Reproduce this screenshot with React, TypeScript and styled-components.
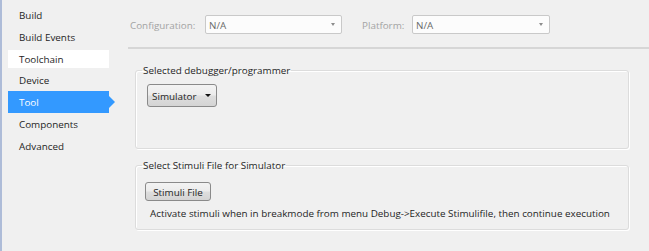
import React from "react";
import styled, { createGlobalStyle, css } from "styled-components";

const Global = createGlobalStyle`
  html, body { margin: 0; padding: 0; background: #f0f0f0; }
  body { font-family: "Open Sans", "Noto Sans", sans-serif; font-size: 9.85px; color: #1e1e1e; }
  * { box-sizing: border-box; }
`;

const Page = styled.div`
  width: 649px;
  height: 251px;
  display: flex;
  background: #f0f0f0;
  overflow: hidden;
`;

const Sidebar = styled.nav`
  width: 128px;
  flex: none;
  border-left: 2px solid #aebcd8;
  padding: 4px 0 0 6px;
  display: flex;
  flex-direction: column;
`;

type NavState = "normal" | "hover" | "selected";

const NavItem = styled.div<{ $state: NavState }>`
  position: relative;
  width: 101px;
  height: 21.8px;
  padding-left: 11px;
  display: flex;
  align-items: center;
  color: #1e1e1e;
  ${(p) =>
    p.$state === "hover" &&
    css`
      background: #ffffff;
      background-clip: padding-box;
      border-top: 2px solid transparent;
      border-bottom: 1.5px solid transparent;
    `}
  ${(p) =>
    p.$state === "selected" &&
    css`
      background: #3399ff;
      color: #ffffff;
      &::after {
        content: "";
        position: absolute;
        right: -6px;
        top: 50%;
        margin-top: -6px;
        border-left: 6px solid #3399ff;
        border-top: 6px solid transparent;
        border-bottom: 6px solid transparent;
      }
    `}
`;

const Content = styled.main`
  flex: 1;
  display: flex;
  flex-direction: column;
`;

const TopBar = styled.div`
  height: 49px;
  padding: 2px 0 0 2px;
  display: flex;
  align-items: center;
  border-bottom: 2px solid #d6d6d6;
`;

const FieldLabel = styled.span<{ $width: number; $gap?: number }>`
  width: ${(p) => p.$width}px;
  margin-left: ${(p) => p.$gap ?? 0}px;
  color: #a3a3a3;
  flex: none;
`;

const ComboDisabled = styled.div<{ $width: number }>`
  width: ${(p) => p.$width}px;
  height: 19px;
  border: 1px solid #c9c9c9;
  border-radius: 2px;
  background: #fcfcfc;
  display: flex;
  align-items: center;
  justify-content: space-between;
  padding: 0 6px 0 3px;
  color: #6a6a6a;
  flex: none;
`;

const SmallArrow = styled.span<{ $color: string; $size?: number }>`
  width: 0;
  height: 0;
  border-left: ${(p) => p.$size ?? 2.5}px solid transparent;
  border-right: ${(p) => p.$size ?? 2.5}px solid transparent;
  border-top: ${(p) => (p.$size ?? 2.5) + 0.5}px solid ${(p) => p.$color};
`;

const Body = styled.div`
  padding: 0 20px 0 7px;
  display: flex;
  flex-direction: column;
`;

const Group = styled.fieldset<{ $top: number }>`
  margin: ${(p) => p.$top}px 0 0 0;
  padding: 0;
  border: 1px solid #dcdcdc;
  border-radius: 3px;
  box-shadow: 1px 1px 0 #ffffff, inset 1px 1px 0 #ffffff;
  min-width: 0;
`;

const Legend = styled.legend`
  margin-left: 6px;
  padding: 0 1px;
  line-height: 14px;
  color: #1e1e1e;
`;

const GroupBody = styled.div<{ $pad: string }>`
  padding: ${(p) => p.$pad};
  display: flex;
  flex-direction: column;
  align-items: flex-start;
`;

const aeroButton = css`
  border: 1px solid #8a8a8a;
  border-radius: 3px;
  background: linear-gradient(#f3f3f3 0%, #ececec 48%, #dedede 52%, #d4d4d4 100%);
  color: #1e1e1e;
  font-family: inherit;
  font-size: inherit;
`;

const DropButton = styled.div`
  ${aeroButton};
  width: 70px;
  height: 23px;
  margin-top: 7px;
  display: flex;
  align-items: center;
  justify-content: space-between;
  padding: 0 5px 0 4px;
`;

const PushButton = styled.button`
  ${aeroButton};
  width: 66px;
  height: 19px;
  margin-top: 10px;
  padding: 0;
  display: flex;
  align-items: center;
  justify-content: center;
`;

const Hint = styled.div`
  margin: 5px 0 0 5px;
  line-height: 14px;
  color: #1e1e1e;
`;

const navItems: { label: string; state: NavState }[] = [
  { label: "Build", state: "normal" },
  { label: "Build Events", state: "normal" },
  { label: "Toolchain", state: "hover" },
  { label: "Device", state: "normal" },
  { label: "Tool", state: "selected" },
  { label: "Components", state: "normal" },
  { label: "Advanced", state: "normal" },
];

export default function App() {
  return (
    <>
      <Global />
      <Page>
        <Sidebar>
          {navItems.map((n) => (
            <NavItem key={n.label} $state={n.state}>
              {n.label}
            </NavItem>
          ))}
        </Sidebar>
        <Content>
          <TopBar>
            <FieldLabel $width={75}>Configuration:</FieldLabel>
            <ComboDisabled $width={137}>
              N/A
              <SmallArrow $color="#8c8c8c" />
            </ComboDisabled>
            <FieldLabel $width={50} $gap={20}>
              Platform:
            </FieldLabel>
            <ComboDisabled $width={138}>
              N/A
              <SmallArrow $color="#8c8c8c" />
            </ComboDisabled>
          </TopBar>
          <Body>
            <Group $top={14}>
              <Legend>Selected debugger/programmer</Legend>
              <GroupBody $pad="0 11px 41px">
                <DropButton>
                  Simulator
                  <SmallArrow $color="#111" $size={3} />
                </DropButton>
              </GroupBody>
            </Group>
            <Group $top={9}>
              <Legend>Select Stimuli File for Simulator</Legend>
              <GroupBody $pad="0 9px 9px">
                <PushButton>Stimuli File</PushButton>
                <Hint>
                  Activate stimuli when in breakmode from menu Debug-&gt;Execute Stimulifile, then continue execution
                </Hint>
              </GroupBody>
            </Group>
          </Body>
        </Content>
      </Page>
    </>
  );
}
